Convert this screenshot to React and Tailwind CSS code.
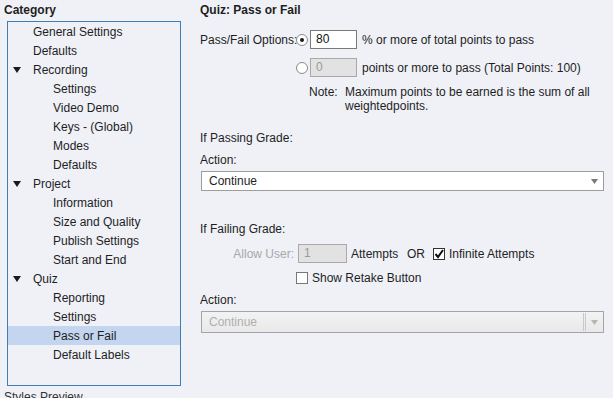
import React from 'react';

const TREE = [
  { label: 'General Settings', level: 1 },
  { label: 'Defaults', level: 1 },
  { label: 'Recording', level: 1, open: true },
  { label: 'Settings', level: 2 },
  { label: 'Video Demo', level: 2 },
  { label: 'Keys - (Global)', level: 2 },
  { label: 'Modes', level: 2 },
  { label: 'Defaults', level: 2 },
  { label: 'Project', level: 1, open: true },
  { label: 'Information', level: 2 },
  { label: 'Size and Quality', level: 2 },
  { label: 'Publish Settings', level: 2 },
  { label: 'Start and End', level: 2 },
  { label: 'Quiz', level: 1, open: true },
  { label: 'Reporting', level: 2 },
  { label: 'Settings', level: 2 },
  { label: 'Pass or Fail', level: 2, selected: true },
  { label: 'Default Labels', level: 2 },
];

const Triangle = () => (
  <svg width="8" height="6" viewBox="0 0 8 6" className="block">
    <path d="M0 0 H8 L4 6 Z" fill="#1a1a1a" />
  </svg>
);

const Radio = ({ checked }) => (
  <span className="w-[12px] h-[12px] rounded-full border border-[#8a8a8a] bg-white flex items-center justify-center shrink-0">
    {checked && <span className="w-[4px] h-[4px] rounded-full bg-[#1a1a1a]" />}
  </span>
);

const Checkbox = ({ checked }) => (
  <span className={`w-[12px] h-[12px] border bg-white flex items-center justify-center shrink-0 ${checked ? 'border-[#333]' : 'border-[#777]'}`}>
    {checked && (
      <svg width="10" height="10" viewBox="0 0 10 10">
        <path d="M1.5 5 L4 8 L9 1" stroke="#111" strokeWidth="2" fill="none" />
      </svg>
    )}
  </span>
);

const SelectArrow = ({ light }) => (
  <svg width="7" height="5" viewBox="0 0 7 5">
    <path d="M0 0 H7 L3.5 5 Z" fill={light ? '#b5b5b5' : '#7a7a7a'} />
  </svg>
);

const CategoryTree = () => (
  <div className="w-[190px] shrink-0 flex flex-col">
    <div className="h-[21px] shrink-0 pl-[4px] leading-[20px] font-bold text-[#1e1e1e]">Category</div>
    <div className="ml-[7px] w-[174px] h-[365px] shrink-0 border border-[#3f7fb5]">
      {TREE.map((item, i) => (
        <div
          key={i}
          className={`h-[19px] flex items-center whitespace-nowrap ${item.selected ? 'bg-[#c3d5ef]' : ''}`}
        >
          {item.level === 1 ? (
            <>
              <span className="w-[25px] pl-[5px] flex items-center">{item.open && <Triangle />}</span>
              <span>{item.label}</span>
            </>
          ) : (
            <span className="pl-[45px]">{item.label}</span>
          )}
        </div>
      ))}
    </div>
    <div className="pl-[4px] mt-[3px] shrink-0 leading-[16px] text-[#333]">Styles Preview</div>
  </div>
);

const PassFail = () => (
  <div className="flex-1 pl-[10px] pr-[9px] flex flex-col whitespace-nowrap">
    <div className="h-[20px] leading-[20px] font-bold text-[#1e1e1e]">Quiz: Pass or Fail</div>

    <div className="mt-[10px] h-[19px] flex items-center">
      <span className="w-[96px]">Pass/Fail Options:</span>
      <Radio checked />
      <span className="ml-[2px] w-[47px] h-[19px] border border-[#7a7a7a] bg-white pl-[5px] leading-[17px] text-[#111]">80</span>
      <span className="ml-[5px]">% or more of total points to pass</span>
    </div>

    <div className="mt-[9px] h-[19px] flex items-center">
      <span className="w-[96px]" />
      <Radio />
      <span className="ml-[2px] w-[47px] h-[19px] border border-[#a9a9a9] bg-[#e2e2e2] pl-[5px] leading-[17px] text-[#9a9a9a]">0</span>
      <span className="ml-[5px]">points or more to pass (Total Points: 100)</span>
    </div>

    <div className="mt-[8px] flex leading-[14px]">
      <span className="w-[109px]" />
      <span className="w-[36px]">Note:</span>
      <span>
        Maximum points to be earned is the sum of all
        <br />
        weightedpoints.
      </span>
    </div>

    <div className="mt-[17px] h-[16px] leading-[16px]">If Passing Grade:</div>
    <div className="mt-[6px] h-[16px] leading-[16px]">Action:</div>
    <div className="mt-[3px] ml-[1px] h-[20px] border border-[#9d9d9d] bg-white flex items-center pl-[7px] pr-[5px]">
      <span className="flex-1">Continue</span>
      <SelectArrow />
    </div>

    <div className="mt-[30px] h-[16px] leading-[16px]">If Failing Grade:</div>

    <div className="mt-[7px] h-[19px] flex items-center">
      <span className="w-[94px] text-right text-[#a8a8a8]">Allow User:</span>
      <span className="ml-[4px] w-[49px] h-[19px] border border-[#a9a9a9] bg-[#e2e2e2] pl-[5px] leading-[17px] text-[#9a9a9a]">1</span>
      <span className="ml-[4px] w-[56px]">Attempts</span>
      <span className="w-[26px]">OR</span>
      <Checkbox checked />
      <span className="ml-[4px]">Infinite Attempts</span>
    </div>

    <div className="mt-[7px] h-[16px] flex items-center">
      <span className="w-[96px]" />
      <Checkbox />
      <span className="ml-[4px]">Show Retake Button</span>
    </div>

    <div className="mt-[6px] h-[16px] leading-[16px]">Action:</div>
    <div className="mt-[3px] ml-[1px] h-[22px] border border-[#a5a5a5] bg-gradient-to-b from-[#f3f3f3] to-[#e9e9e9] flex items-center pl-[7px]">
      <span className="flex-1 text-[#b0b0b0]">Continue</span>
      <span className="w-[3px] h-[18px] border-l border-r border-[#c8c8c8]" />
      <span className="w-[17px] flex justify-center"><SelectArrow light /></span>
    </div>
  </div>
);

export default function App() {
  return (
    <div
      className="w-[613px] h-[398px] overflow-hidden bg-[#eff1f7] flex text-[12px] text-[#1e1e1e]"
      style={{ fontFamily: '"Liberation Sans", Arial, sans-serif' }}
    >
      <CategoryTree />
      <PassFail />
    </div>
  );
}
